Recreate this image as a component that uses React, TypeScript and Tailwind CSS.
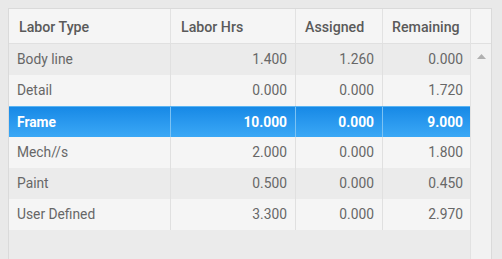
const rows = [
  { type: 'Body line', hrs: '1.400', assigned: '1.260', remaining: '0.000' },
  { type: 'Detail', hrs: '0.000', assigned: '0.000', remaining: '1.720' },
  { type: 'Frame', hrs: '10.000', assigned: '0.000', remaining: '9.000' },
  { type: 'Mech//s', hrs: '2.000', assigned: '0.000', remaining: '1.800' },
  { type: 'Paint', hrs: '0.500', assigned: '0.000', remaining: '0.450' },
  { type: 'User Defined', hrs: '3.300', assigned: '0.000', remaining: '2.970' },
]

const SELECTED = 2

export default function App() {
  return (
    <div className="w-[502px] h-[259px] overflow-hidden bg-[#e9e9e9] pt-[8px] pl-[8px] font-['Roboto',sans-serif] text-[13.8px]">
      <div className="flex h-full w-[484px] border-l border-t border-r border-[#dadada]">
        {/* grid */}
        <div className="w-[461px] h-full bg-[#ebebeb]">
          <div className="flex h-[35px] bg-[#f5f5f5] border-b border-[#e0e0e0] text-[#5a5a5a] font-medium text-[14.2px]">
            <div className="w-[162px] border-r border-[#e2e2e2] pl-[10px] pt-[3px] flex items-center">Labor Type</div>
            <div className="w-[125px] border-r border-[#e2e2e2] pl-[10px] pt-[3px] flex items-center">Labor Hrs</div>
            <div className="w-[87px] border-r border-[#e2e2e2] pl-[9px] pt-[3px] flex items-center">Assigned</div>
            <div className="w-[87px] pl-[9px] pt-[3px] flex items-center">Remaining</div>
          </div>
          {rows.map((r, i) => {
            const sel = i === SELECTED
            const rowClass = sel
              ? 'bg-gradient-to-b from-[#1689e6] to-[#3aa8f6] text-white font-bold border-t border-[#5ab4f2]'
              : i % 2 === 0
                ? 'bg-[#ebebeb] text-[#676767]'
                : 'bg-[#f5f5f5] text-[#676767]'
            const sep = sel ? 'border-[#7cc2f3]' : 'border-[#e0e0e0]'
            return (
              <div key={r.type} className={`flex h-[31px] ${rowClass}`}>
                <div className={`w-[162px] border-r ${sep} pl-[8px] flex items-center`}>{r.type}</div>
                <div className={`w-[125px] border-r ${sep} pr-[8px] flex items-center justify-end`}>{r.hrs}</div>
                <div className={`w-[87px] border-r ${sep} pr-[8px] flex items-center justify-end`}>{r.assigned}</div>
                <div className={`w-[87px] pr-[7px] flex items-center justify-end`}>{r.remaining}</div>
              </div>
            )
          })}
        </div>
        {/* scrollbar column */}
        <div className="w-[21px] h-full border-l border-[#e2e2e2] bg-[#f2f2f2] flex flex-col">
          <div className="h-[35px] bg-[#f5f5f5] border-b border-[#e0e0e0]" />
          <div className="flex justify-center pt-[10px]">
            <svg width="9" height="5" viewBox="0 0 9 5">
              <path d="M4.5 0 L9 5 L0 5 Z" fill="#b0b0b0" />
            </svg>
          </div>
        </div>
      </div>
    </div>
  )
}
